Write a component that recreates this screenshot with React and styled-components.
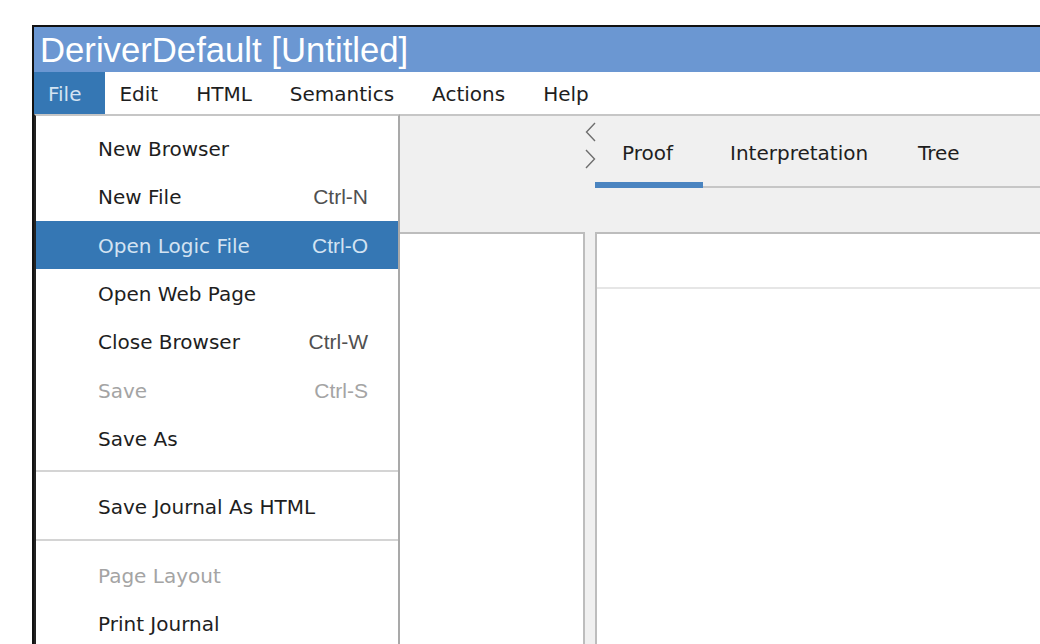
import React from "react";
import styled, { createGlobalStyle } from "styled-components";

const colors = {
  title: "#6b97d2",
  select: "#3577b4",
  selectText: "#d3e3f2",
  tabLine: "#4a84c0",
  panel: "#f0f0f0",
  rule: "#c6c6c6",
  text: "#1e1e1e",
  disabled: "#a4a4a4",
};

const uiFont = `"DejaVu Sans", "Liberation Sans", sans-serif`;

const GlobalStyle = createGlobalStyle`
  html, body {
    margin: 0;
    padding: 0;
    background: #fff;
    overflow: hidden;
  }
  body {
    width: 1040px;
    height: 644px;
  }
`;

const Page = styled.div`
  height: 644px;
  padding: 25px 0 0 32px;
  box-sizing: border-box;
  overflow: hidden;
`;

const Window = styled.div`
  display: flex;
  flex-direction: column;
  width: 1100px;
  height: 100%;
  border-top: 2px solid #111;
  border-left: 2px solid #111;
  box-sizing: border-box;
`;

const TitleBar = styled.div`
  height: 45px;
  box-sizing: border-box;
  padding: 2px 0 0 6px;
  background: ${colors.title};
  color: #fff;
  font-family: "Liberation Sans", Arial, sans-serif;
  font-size: 34.7px;
  line-height: 43px;
  white-space: nowrap;
`;

const MenuBar = styled.div`
  display: flex;
  height: 42px;
  background: #fff;
  font-family: ${uiFont};
  font-size: 20px;
`;

const MenuTitle = styled.div`
  padding: 2px 24px 0 14px;
  line-height: 40px;
  color: ${(p) => (p.open ? colors.selectText : colors.text)};
  background: ${(p) => (p.open ? colors.select : "transparent")};
`;

const Body = styled.div`
  position: relative;
  flex: 1;
  display: flex;
  background: ${colors.panel};
  border-top: 2px solid ${colors.rule};
`;

const Column = styled.div`
  display: flex;
  flex-direction: column;
  width: ${(p) => p.width || "auto"};
  flex: ${(p) => (p.width ? "none" : 1)};
`;

const HeaderSpace = styled.div`
  height: 116px;
`;

const Pane = styled.div`
  flex: 1;
  display: flex;
  flex-direction: column;
  background: #fff;
  border-top: 2px solid #bdbdbd;
  ${(p) => (p.side === "left" ? "border-right" : "border-left")}: 2px solid #bdbdbd;
  ${(p) => p.side === "right" && "margin-left: 10px;"}
`;

const PaneHeader = styled.div`
  height: 53px;
  border-bottom: 2px solid #e6e6e6;
`;

const TabStrip = styled.div`
  display: flex;
  height: 116px;
`;

const Scroller = styled.div`
  display: flex;
  flex-direction: column;
  gap: 7px;
  width: 10px;
  padding-top: 6px;
`;

const TabRow = styled.div`
  display: flex;
  height: 72px;
  flex: 1;
  box-shadow: inset 0 -2px 0 ${colors.rule};
  font-family: ${uiFont};
  font-size: 20px;
  color: ${colors.text};
`;

const Tab = styled.div`
  width: ${(p) => p.width}px;
  box-sizing: border-box;
  padding: 2px 0 0 27px;
  line-height: 70px;
  white-space: nowrap;
  ${(p) => p.active && `box-shadow: inset 0 -6px 0 ${colors.tabLine};`}
`;

const Dropdown = styled.div`
  position: absolute;
  left: 0;
  top: -2px;
  bottom: 0;
  width: 366px;
  box-sizing: border-box;
  padding-top: 8px;
  background: #fff;
  border-top: 2px solid ${colors.rule};
  border-left: 2px solid #222;
  border-right: 2px solid #a9a9a9;
  font-family: ${uiFont};
  font-size: 20px;
`;

const Item = styled.div`
  display: flex;
  justify-content: space-between;
  height: 48.33px;
  box-sizing: border-box;
  padding: 2px 30px 0 62px;
  line-height: 46px;
  white-space: nowrap;
  color: ${(p) =>
    p.selected ? colors.selectText : p.disabled ? colors.disabled : colors.text};
  background: ${(p) => (p.selected ? colors.select : "transparent")};
`;

const Shortcut = styled.span`
  font-family: "Liberation Sans", Arial, sans-serif;
  font-size: 21px;
  color: ${(p) =>
    p.selected ? colors.selectText : p.disabled ? colors.disabled : "#505050"};
`;

const Separator = styled.div`
  height: 2px;
  margin: 8px 0 10px;
  background: #d4d4d4;
`;

const Chevron = ({ dir }) => (
  <svg width="11" height="20" viewBox="0 0 11 20">
    <polyline
      points={dir === "left" ? "10,1 1.5,10 10,19" : "1,1 9.5,10 1,19"}
      fill="none"
      stroke="#6e6e6e"
      strokeWidth="1.4"
    />
  </svg>
);

const menus = ["File", "Edit", "HTML", "Semantics", "Actions", "Help"];

const fileMenu = [
  { label: "New Browser" },
  { label: "New File", key: "Ctrl-N" },
  { label: "Open Logic File", key: "Ctrl-O", selected: true },
  { label: "Open Web Page" },
  { label: "Close Browser", key: "Ctrl-W" },
  { label: "Save", key: "Ctrl-S", disabled: true },
  { label: "Save As" },
  "-",
  { label: "Save Journal As HTML" },
  "-",
  { label: "Page Layout", disabled: true },
  { label: "Print Journal" },
];

const tabs = [
  { label: "Proof", width: 108 },
  { label: "Interpretation", width: 188 },
  { label: "Tree", width: 100 },
];

export default function App() {
  return (
    <>
      <GlobalStyle />
      <Page>
        <Window>
          <TitleBar>DeriverDefault [Untitled]</TitleBar>
          <MenuBar>
            {menus.map((m) => (
              <MenuTitle key={m} open={m === "File"}>
                {m}
              </MenuTitle>
            ))}
          </MenuBar>
          <Body>
            <Column width="551px">
              <HeaderSpace />
              <Pane side="left" />
            </Column>
            <Column>
              <TabStrip>
                <Scroller>
                  <Chevron dir="left" />
                  <Chevron dir="right" />
                </Scroller>
                <TabRow>
                  {tabs.map((t, i) => (
                    <Tab key={t.label} width={t.width} active={i === 0}>
                      {t.label}
                    </Tab>
                  ))}
                </TabRow>
              </TabStrip>
              <Pane side="right">
                <PaneHeader />
              </Pane>
            </Column>

            <Dropdown>
              {fileMenu.map((it, i) =>
                it === "-" ? (
                  <Separator key={i} />
                ) : (
                  <Item key={i} selected={it.selected} disabled={it.disabled}>
                    <span>{it.label}</span>
                    {it.key && (
                      <Shortcut selected={it.selected} disabled={it.disabled}>
                        {it.key}
                      </Shortcut>
                    )}
                  </Item>
                )
              )}
            </Dropdown>
          </Body>
        </Window>
      </Page>
    </>
  );
}
